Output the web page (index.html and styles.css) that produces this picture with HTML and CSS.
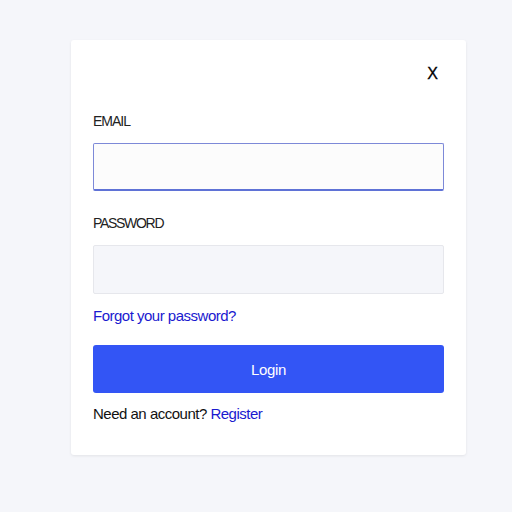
FILE: index.html
```html
<!DOCTYPE html>
<html>
<head>
<meta charset="utf-8">
<link rel="stylesheet" href="styles.css">
</head>
<body>
<div class="page">
  <div class="card">
    <div class="close-row"><span class="close">X</span></div>
    <label class="label label-email">EMAIL</label>
    <div class="input input-focus"></div>
    <label class="label label-pass">PASSWORD</label>
    <div class="input input-pass"></div>
    <a class="link forgot">Forgot your password?</a>
    <button class="btn">Login</button>
    <p class="footer">Need an account? <a class="link">Register</a></p>
  </div>
</div>
</body>
</html>
```
FILE: styles.css
```css
html, body { margin: 0; padding: 0; }
body {
  background: #f5f6fa;
  font-family: "Liberation Sans", Arial, sans-serif;
  color: #111;
  width: 512px;
  height: 512px;
}
.page { padding: 40px 46px 0 71px; }
.card {
  width: 395px;
  box-sizing: border-box;
  background: #fff;
  border-radius: 3px;
  box-shadow: 0 1px 3px rgba(0,0,0,0.08);
  padding: 22px 22px 31px 22px;
  display: flex;
  flex-direction: column;
}
.close-row { display: flex; justify-content: flex-end; height: 24px; padding-right: 6px; }
.close { font-size: 16px; line-height: 20px; margin-top: 2px; color: #000; -webkit-text-stroke: 0.3px #000; }
.label {
  font-size: 14px;
  line-height: 16px;
  letter-spacing: -1px;
  margin-bottom: 14px;
  color: #222;
}
.label-email { margin-top: 27px; }
.label-pass { margin-top: 24px; letter-spacing: -1.3px; }
.input {
  height: 48px;
  box-sizing: border-box;
  background: #f5f6fa;
  border: 1px solid #e6e7ec;
  border-radius: 2px;
}
.input-pass { height: 49px; }
.input-focus {
  background: #fcfcfc;
  border: 1px solid #7d89d8;
  border-bottom: 2px solid #5f72d6;
}
.link { color: #1a1acf; text-decoration: none; }
.forgot { font-size: 15px; letter-spacing: -0.5px; line-height: 20px; margin-top: 12px; }
.btn {
  margin-top: 19px;
  height: 48px;
  border: none;
  border-radius: 3px;
  background: #3355f5;
  color: #fff;
  font-family: inherit;
  font-size: 15px;
  letter-spacing: -0.3px;
}
.footer { margin: 11px 0 0 0; font-size: 15px; letter-spacing: -0.5px; line-height: 20px; }
```
